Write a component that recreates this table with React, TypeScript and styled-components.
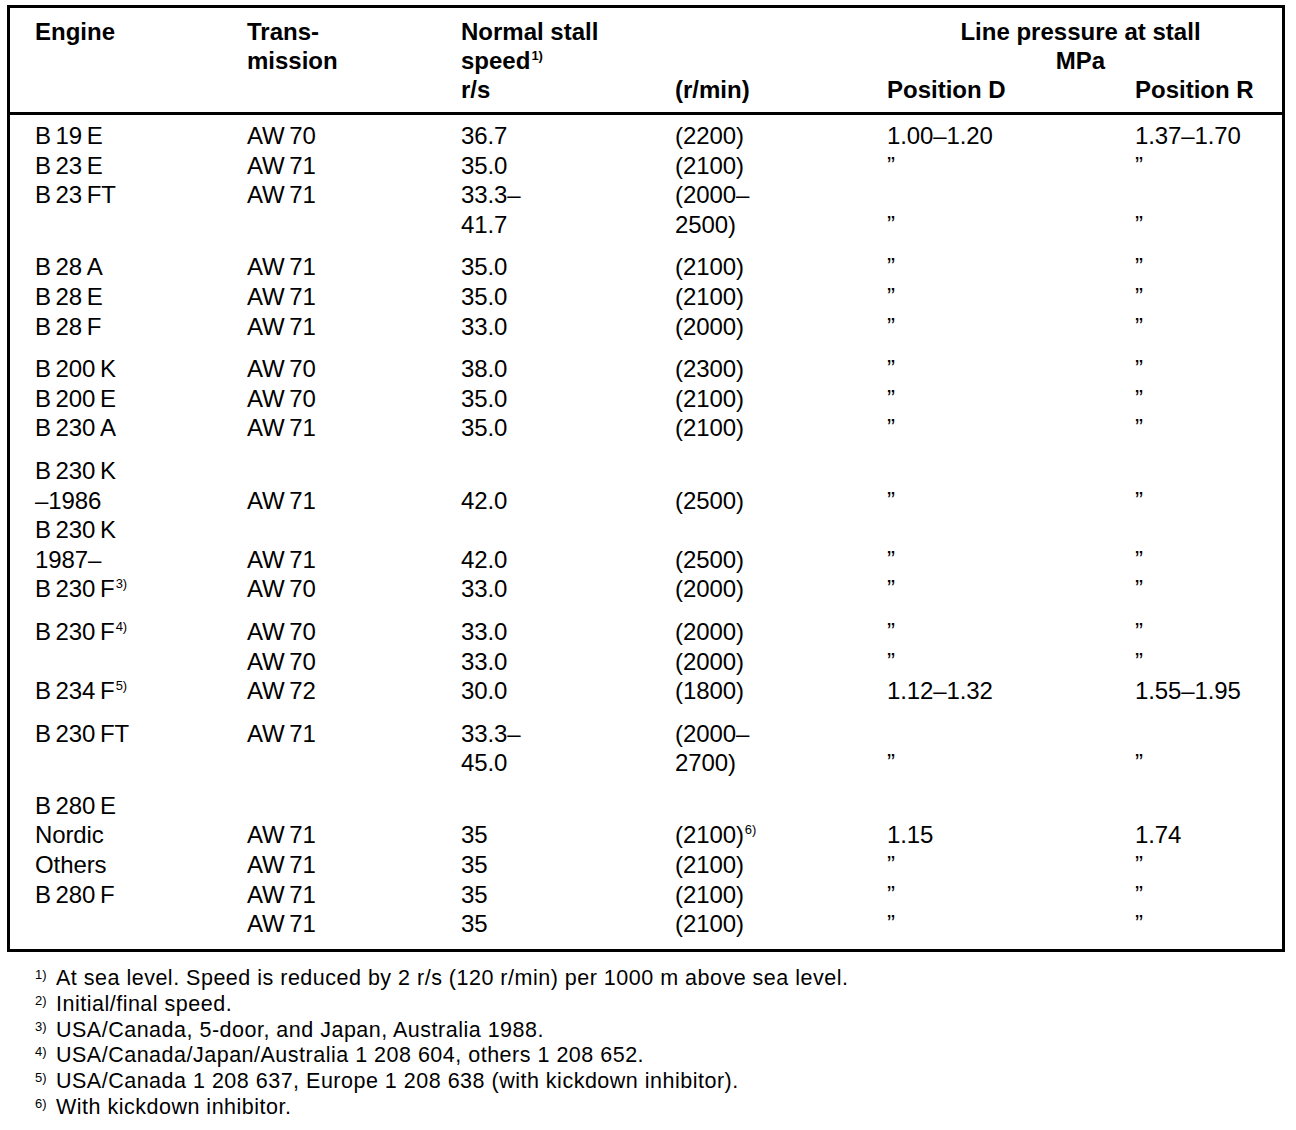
import React from "react";
import styled, { createGlobalStyle } from "styled-components";

const Global = createGlobalStyle`
  html, body { margin: 0; padding: 0; background: #fff; }
  body {
    font-family: "Liberation Sans", Arial, Helvetica, sans-serif;
    color: #000;
  }
`;

const Page = styled.div`
  width: 1296px;
  padding: 5px 0 0 7px;
  box-sizing: border-box;
`;

const Box = styled.div`
  width: 1278px;
  height: 947px;
  box-sizing: border-box;
  border: 3px solid #000;
`;

const cols = "212px 214px 214px 212px 248px 1fr";

const Header = styled.div`
  display: grid;
  grid-template-columns: ${cols};
  grid-template-rows: repeat(3, 29px);
  padding: 9px 0 8px 25px;
  border-bottom: 3px solid #000;
  font-size: 24px;
  font-weight: bold;
  line-height: 29px;
`;

const HCell = styled.div<{ $col: number; $row: number; $span?: number; $center?: boolean }>`
  grid-column: ${(p) => p.$col} / span ${(p) => p.$span ?? 1};
  grid-row: ${(p) => p.$row};
  text-align: ${(p) => (p.$center ? "center" : "left")};
  padding-right: ${(p) => (p.$center ? "8px" : "0")};
  white-space: nowrap;
`;

const Body = styled.div`
  padding: 6px 0 0 25px;
  font-size: 24px;
  line-height: 29.6px;
`;

const Group = styled.div<{ $first?: boolean }>`
  margin-top: ${(p) => (p.$first ? "0" : "13px")};
`;

const Row = styled.div`
  display: grid;
  grid-template-columns: ${cols};
  height: 29.6px;
`;

const Cell = styled.div`
  white-space: nowrap;
  letter-spacing: -0.1px;
`;

const Sup = styled.sup`
  font-size: 13px;
  line-height: 0;
  vertical-align: 9px;
  margin-left: 1px;
`;

const Notes = styled.div`
  padding: 14px 0 0 28px;
  font-size: 21.5px;
  line-height: 25.8px;
  letter-spacing: 0.5px;
`;

const Note = styled.div`
  display: flex;
  height: 25.8px;
  white-space: nowrap;
`;

const NoteMark = styled.span`
  font-size: 13px;
  line-height: 18px;
  width: 21px;
  flex: none;
  letter-spacing: 0;
`;

const T = "\u2009";
const D = "\u201D";

type R = [React.ReactNode, string, string, React.ReactNode, string, string];

const S = (n: number) => <Sup>{n})</Sup>;

const groups: R[][] = [
  [
    [`B${T}19${T}E`, `AW${T}70`, "36.7", "(2200)", "1.00–1.20", "1.37–1.70"],
    [`B${T}23${T}E`, `AW${T}71`, "35.0", "(2100)", D, D],
    [`B${T}23${T}FT`, `AW${T}71`, "33.3–", "(2000–", "", ""],
    ["", "", "41.7", "2500)", D, D],
  ],
  [
    [`B${T}28${T}A`, `AW${T}71`, "35.0", "(2100)", D, D],
    [`B${T}28${T}E`, `AW${T}71`, "35.0", "(2100)", D, D],
    [`B${T}28${T}F`, `AW${T}71`, "33.0", "(2000)", D, D],
  ],
  [
    [`B${T}200${T}K`, `AW${T}70`, "38.0", "(2300)", D, D],
    [`B${T}200${T}E`, `AW${T}70`, "35.0", "(2100)", D, D],
    [`B${T}230${T}A`, `AW${T}71`, "35.0", "(2100)", D, D],
  ],
  [
    [`B${T}230${T}K`, "", "", "", "", ""],
    ["–1986", `AW${T}71`, "42.0", "(2500)", D, D],
    [`B${T}230${T}K`, "", "", "", "", ""],
    ["1987–", `AW${T}71`, "42.0", "(2500)", D, D],
    [<>{`B${T}230${T}F`}{S(3)}</>, `AW${T}70`, "33.0", "(2000)", D, D],
  ],
  [
    [<>{`B${T}230${T}F`}{S(4)}</>, `AW${T}70`, "33.0", "(2000)", D, D],
    ["", `AW${T}70`, "33.0", "(2000)", D, D],
    [<>{`B${T}234${T}F`}{S(5)}</>, `AW${T}72`, "30.0", "(1800)", "1.12–1.32", "1.55–1.95"],
  ],
  [
    [`B${T}230${T}FT`, `AW${T}71`, "33.3–", "(2000–", "", ""],
    ["", "", "45.0", "2700)", D, D],
  ],
  [
    [`B${T}280${T}E`, "", "", "", "", ""],
    ["Nordic", `AW${T}71`, "35", <>(2100){S(6)}</>, "1.15", "1.74"],
    ["Others", `AW${T}71`, "35", "(2100)", D, D],
    [`B${T}280${T}F`, `AW${T}71`, "35", "(2100)", D, D],
    ["", `AW${T}71`, "35", "(2100)", D, D],
  ],
];

const notes = [
  "At sea level. Speed is reduced by 2 r/s (120 r/min) per 1000 m above sea level.",
  "Initial/final speed.",
  "USA/Canada, 5-door, and Japan, Australia 1988.",
  "USA/Canada/Japan/Australia 1 208 604, others 1 208 652.",
  "USA/Canada 1 208 637, Europe 1 208 638 (with kickdown inhibitor).",
  "With kickdown inhibitor.",
];

export default function App() {
  return (
    <>
      <Global />
      <Page>
        <Box>
          <Header>
            <HCell $col={1} $row={1}>Engine</HCell>
            <HCell $col={2} $row={1}>Trans-</HCell>
            <HCell $col={2} $row={2}>mission</HCell>
            <HCell $col={3} $row={1}>Normal stall</HCell>
            <HCell $col={3} $row={2}>speed{S(1)}</HCell>
            <HCell $col={3} $row={3}>r/s</HCell>
            <HCell $col={4} $row={3}>(r/min)</HCell>
            <HCell $col={5} $row={1} $span={2} $center>Line pressure at stall</HCell>
            <HCell $col={5} $row={2} $span={2} $center>MPa</HCell>
            <HCell $col={5} $row={3}>Position D</HCell>
            <HCell $col={6} $row={3}>Position R</HCell>
          </Header>
          <Body>
            {groups.map((g, gi) => (
              <Group key={gi} $first={gi === 0}>
                {g.map((r, ri) => (
                  <Row key={ri}>
                    {r.map((c, ci) => (
                      <Cell key={ci}>{c}</Cell>
                    ))}
                  </Row>
                ))}
              </Group>
            ))}
          </Body>
        </Box>
        <Notes>
          {notes.map((n, i) => (
            <Note key={i}>
              <NoteMark>{i + 1})</NoteMark>
              <span>{n}</span>
            </Note>
          ))}
        </Notes>
      </Page>
    </>
  );
}
